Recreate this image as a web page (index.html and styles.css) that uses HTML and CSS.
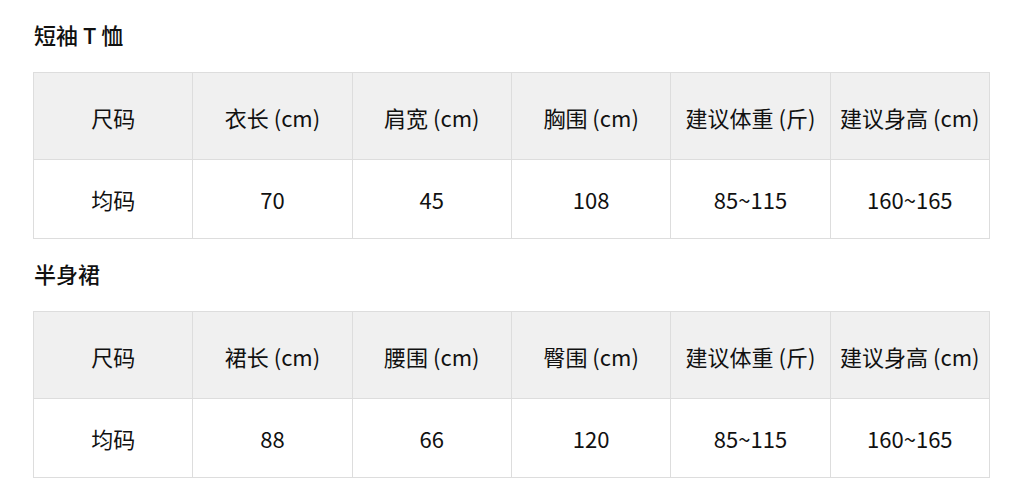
FILE: index.html
```html
<!DOCTYPE html>
<html lang="zh-CN">
<head>
<meta charset="utf-8">
<link rel="stylesheet" href="styles.css">
</head>
<body>
<div class="page">
  <section class="block">
    <h2 class="title">短袖 T 恤</h2>
    <table class="size-table">
      <tr class="head">
        <th>尺码</th><th>衣长 (cm)</th><th>肩宽 (cm)</th><th>胸围 (cm)</th><th>建议体重 (斤)</th><th>建议身高 (cm)</th>
      </tr>
      <tr class="data">
        <td>均码</td><td>70</td><td>45</td><td>108</td><td>85~115</td><td>160~165</td>
      </tr>
    </table>
  </section>
  <section class="block">
    <h2 class="title second">半身裙</h2>
    <table class="size-table">
      <tr class="head">
        <th>尺码</th><th>裙长 (cm)</th><th>腰围 (cm)</th><th>臀围 (cm)</th><th>建议体重 (斤)</th><th>建议身高 (cm)</th>
      </tr>
      <tr class="data">
        <td>均码</td><td>88</td><td>66</td><td>120</td><td>85~115</td><td>160~165</td>
      </tr>
    </table>
  </section>
</div>
</body>
</html>
```
FILE: styles.css
```css
html, body {
  margin: 0;
  padding: 0;
  background: #ffffff;
}
body {
  font-family: "Noto Sans CJK SC", "Noto Sans", sans-serif;
  color: #111111;
}
.page {
  padding-left: 33px;
  width: 957px;
}
.title {
  margin: 0;
  height: 72px;
  line-height: 69px;
  font-size: 22px;
  font-weight: 500;
  padding-left: 1px;
  overflow: hidden;
}
.title.second {
  height: 72px;
  line-height: 68px;
}
.size-table {
  width: 957px;
  border-collapse: collapse;
  table-layout: fixed;
  font-size: 22px;
}
.size-table th,
.size-table td {
  border: 1px solid #dddddd;
  text-align: center;
  padding: 0;
  font-weight: 400;
}
.size-table .head th {
  background: #f0f0f0;
  height: 84px;
  padding-top: 2px;
}
.size-table .data td {
  height: 78px;
}
```
